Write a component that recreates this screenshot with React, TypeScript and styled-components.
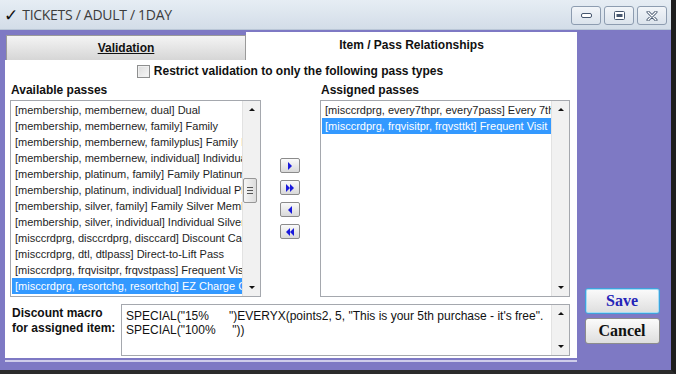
import React from 'react';
import styled, { createGlobalStyle } from 'styled-components';

const GlobalStyle = createGlobalStyle`
  html, body {
    margin: 0;
    padding: 0;
  }
  body {
    width: 676px;
    height: 374px;
    overflow: hidden;
    background: #1c1c1c;
    font-family: "Liberation Sans", Arial, sans-serif;
  }
`;

const AVAILABLE = [
  '[membership, membernew, dual] Dual',
  '[membership, membernew, family] Family',
  '[membership, membernew, familyplus] Family Plus',
  '[membership, membernew, individual] Individual Membership',
  '[membership, platinum, family] Family Platinum Membership',
  '[membership, platinum, individual] Individual Platinum',
  '[membership, silver, family] Family Silver Membership',
  '[membership, silver, individual] Individual Silver Membership',
  '[misccrdprg, disccrdprg, disccard] Discount Card',
  '[misccrdprg, dtl, dtlpass] Direct-to-Lift Pass',
  '[misccrdprg, frqvisitpr, frqvstpass] Frequent Visitor Pass',
  '[misccrdprg, resortchg, resortchg] EZ Charge Card',
];

const ASSIGNED = [
  '[misccrdprg, every7thpr, every7pass] Every 7th Visit',
  '[misccrdprg, frqvisitpr, frqvsttkt] Frequent Visit',
];

const Window = styled.div`
  width: 676px;
  height: 374px;
  box-sizing: border-box;
  display: flex;
  flex-direction: column;
  background: #7e79c4;
  border-right: 5px solid #1e1e1e;
  border-bottom: 4px solid #2b2b2b;
`;

const TitleBar = styled.div`
  height: 30px;
  flex-shrink: 0;
  display: flex;
  align-items: center;
  padding: 0 4px 0 4px;
  background: linear-gradient(#e6edf4, #d3dde8);
  border-bottom: 1px solid #b9c6d6;
  box-sizing: border-box;
`;

const Check = styled.span`
  font-family: "DejaVu Sans", sans-serif;
  font-size: 17px;
  color: #111;
  margin-right: 4px;
`;

const Title = styled.span`
  font-family: "Open Sans", "Liberation Sans", sans-serif;
  font-size: 14px;
  color: #3c3c3c;
  letter-spacing: -0.3px;
  flex: 1;
`;

const WinButtons = styled.div`
  display: flex;
  gap: 3px;
  margin-top: 2px;
`;

const WinButton = styled.div`
  width: 30px;
  height: 19px;
  box-sizing: border-box;
  border: 1px solid #8d9cb0;
  border-radius: 3px;
  background: linear-gradient(#f2f5f9, #dbe3ec);
  display: flex;
  align-items: center;
  justify-content: center;
`;

const Body = styled.div`
  flex: 1;
  display: flex;
  padding: 2px 0 0 5px;
`;

const TabBox = styled.div`
  width: 572px;
  display: flex;
  flex-direction: column;
`;

const TabRow = styled.div`
  height: 28px;
  display: flex;
  align-items: flex-end;
`;

const Tab = styled.div<{ $active?: boolean }>`
  box-sizing: border-box;
  height: ${(p) => (p.$active ? 28 : 25)}px;
  width: ${(p) => (p.$active ? 331 : 240)}px;
  margin-left: ${(p) => (p.$active ? 0 : 1)}px;
  display: flex;
  align-items: center;
  justify-content: center;
  font-size: 12px;
  font-weight: bold;
  color: #111;
  background: ${(p) => (p.$active ? '#ffffff' : 'linear-gradient(#f4f4f4, #d6d6d6)')};
  border: ${(p) => (p.$active ? 'none' : '1px solid #9a9a9a')};
  border-bottom: none;
  text-decoration: ${(p) => (p.$active ? 'none' : 'underline')};
  padding-bottom: ${(p) => (p.$active ? 2 : 0)}px;
`;

const Panel = styled.div`
  height: 298px;
  box-sizing: border-box;
  background: #ffffff;
  padding: 0 7px 0 5px;
  display: flex;
  flex-direction: column;
  box-shadow: 0 2px 0 #7e79c4, 0 4px 0 #cfcdea;
`;

const CheckRow = styled.label`
  height: 22px;
  display: flex;
  align-items: center;
  justify-content: center;
  gap: 4px;
  font-size: 12px;
  font-weight: bold;
  color: #111;
`;

const CheckBox = styled.span`
  width: 11px;
  height: 11px;
  border: 1px solid #8e8f8f;
  background: linear-gradient(135deg, #dcdcdc, #f7f7f7);
  box-shadow: inset 0 0 0 1px #f0f0f0;
`;

const Lists = styled.div`
  display: grid;
  grid-template-columns: 251px 59px 250px;
  grid-template-rows: 18px 197px;
`;

const Label = styled.div`
  font-size: 12px;
  font-weight: bold;
  color: #111;
  padding-left: 1px;
  line-height: 17px;
`;

const ListBox = styled.div`
  grid-row: 2;
  box-sizing: border-box;
  border: 1px solid #a5a8ae;
  display: flex;
  overflow: hidden;
`;

const Items = styled.div`
  flex: 1;
  min-width: 0;
  padding-top: 1px;
`;

const Item = styled.div<{ $selected?: boolean }>`
  height: 16px;
  line-height: 16px;
  padding-left: 3px;
  margin-left: 1px;
  font-size: 11px;
  white-space: nowrap;
  overflow: hidden;
  color: ${(p) => (p.$selected ? '#ffffff' : '#1e1e1e')};
  background: ${(p) => (p.$selected ? '#3399ff' : 'transparent')};
`;

const ScrollBar = styled.div`
  width: 17px;
  flex-shrink: 0;
  display: flex;
  flex-direction: column;
  background: #f1f1f1;
  border-left: 1px solid #e2e2e2;
`;

const ScrollArrow = styled.div`
  height: 17px;
  display: flex;
  align-items: center;
  justify-content: center;
`;

const Track = styled.div`
  flex: 1;
  position: relative;
`;

const Thumb = styled.div`
  position: absolute;
  left: 0;
  width: 14px;
  height: 25px;
  box-sizing: border-box;
  border: 1px solid #979797;
  border-radius: 2px;
  background: linear-gradient(90deg, #f6f6f6, #dcdcdc);
  display: flex;
  flex-direction: column;
  align-items: center;
  justify-content: center;
  gap: 2px;

  span {
    width: 6px;
    height: 1px;
    background: #555;
  }
`;

const Arrows = styled.div`
  grid-row: 2;
  grid-column: 2;
  display: flex;
  flex-direction: column;
  align-items: center;
  justify-content: center;
  gap: 7px;
  padding-right: 1px;
`;

const MoveButton = styled.div`
  width: 20px;
  height: 15px;
  box-sizing: border-box;
  border: 1px solid #8b8b8b;
  border-radius: 2px;
  background: linear-gradient(#fafafa, #d9d9d9);
  display: flex;
  align-items: center;
  justify-content: center;
`;

const MacroRow = styled.div`
  margin-top: 7px;
  display: flex;
`;

const MacroLabel = styled.div`
  width: 109px;
  padding: 2px 0 0 2px;
  font-size: 12px;
  font-weight: bold;
  line-height: 15px;
  color: #111;
`;

const MacroBox = styled.div`
  width: 449px;
  height: 52px;
  box-sizing: border-box;
  border: 1px solid #a5a8ae;
  display: flex;
`;

const MacroText = styled.div`
  flex: 1;
  padding: 4px 0 0 4px;
  font-size: 12px;
  line-height: 14px;
  white-space: pre;
  overflow: hidden;
  color: #111;
`;

const Side = styled.div`
  flex: 1;
  display: flex;
  flex-direction: column;
  align-items: center;
  justify-content: flex-end;
  gap: 4px;
  padding: 0 4px 26px 0;
`;

const DialogButton = styled.div<{ $default?: boolean }>`
  width: 75px;
  height: 26px;
  box-sizing: border-box;
  border: 1px solid ${(p) => (p.$default ? '#3fa3dc' : '#8c8c8c')};
  box-shadow: ${(p) => (p.$default ? 'inset 0 0 0 1px #a6dcf5' : 'none')};
  border-radius: 3px;
  background: linear-gradient(#fbfbfb, #dedede);
  display: flex;
  align-items: center;
  justify-content: center;
  font-family: "Liberation Serif", "Times New Roman", serif;
  font-size: 16px;
  font-weight: bold;
  color: ${(p) => (p.$default ? '#2424b8' : '#111')};
`;

const Tri = ({ dir, color = '#111', size = 4 }: { dir: 'up' | 'down' | 'left' | 'right'; color?: string; size?: number }) => {
  const s = size;
  const pts =
    dir === 'up'
      ? `0,${s} ${s},0 ${s * 2},${s}`
      : dir === 'down'
      ? `0,0 ${s * 2},0 ${s},${s}`
      : dir === 'left'
      ? `${s},0 ${s},${s * 2} 0,${s}`
      : `0,0 ${s},${s} 0,${s * 2}`;
  const w = dir === 'up' || dir === 'down' ? s * 2 : s;
  const h = dir === 'up' || dir === 'down' ? s : s * 2;
  return (
    <svg width={w} height={h} viewBox={`0 0 ${w} ${h}`}>
      <polygon points={pts} fill={color} />
    </svg>
  );
};

const Scroll = ({ thumbTop }: { thumbTop?: number }) => (
  <ScrollBar>
    <ScrollArrow>
      <Tri dir="up" size={3} />
    </ScrollArrow>
    <Track>
      {thumbTop !== undefined && (
        <Thumb style={{ top: thumbTop }}>
          <span />
          <span />
          <span />
        </Thumb>
      )}
    </Track>
    <ScrollArrow>
      <Tri dir="down" size={3} />
    </ScrollArrow>
  </ScrollBar>
);

const Move = ({ dir, double }: { dir: 'left' | 'right'; double?: boolean }) => (
  <MoveButton>
    <Tri dir={dir} color="#1a1adb" size={4} />
    {double && <Tri dir={dir} color="#1a1adb" size={4} />}
  </MoveButton>
);

const App = () => {
  return (
    <Window>
      <GlobalStyle />
      <TitleBar>
        <Check>✓</Check>
        <Title>TICKETS / ADULT / 1DAY</Title>
        <WinButtons>
          <WinButton>
            <svg width="11" height="5" viewBox="0 0 11 5">
              <rect x="0.5" y="0.5" width="10" height="4" rx="1.5" fill="#fff" stroke="#45566e" />
            </svg>
          </WinButton>
          <WinButton>
            <svg width="11" height="9" viewBox="0 0 11 9">
              <rect x="0.5" y="0.5" width="10" height="8" rx="1" fill="#fff" stroke="#45566e" />
              <rect x="2.5" y="3" width="6" height="3" fill="#45566e" />
            </svg>
          </WinButton>
          <WinButton>
            <svg width="12" height="10" viewBox="0 0 12 10">
              <path d="M2 1 L10 9 M10 1 L2 9" stroke="#45566e" strokeWidth="3" strokeLinecap="round" />
              <path d="M2 1 L10 9 M10 1 L2 9" stroke="#fff" strokeWidth="1.2" strokeLinecap="round" />
            </svg>
          </WinButton>
        </WinButtons>
      </TitleBar>
      <Body>
        <TabBox>
          <TabRow>
            <Tab>Validation</Tab>
            <Tab $active>Item / Pass Relationships</Tab>
          </TabRow>
          <Panel>
            <CheckRow>
              <CheckBox />
              Restrict validation to only the following pass types
            </CheckRow>
            <Lists>
              <Label>Available passes</Label>
              <div />
              <Label>Assigned passes</Label>
              <ListBox>
                <Items>
                  {AVAILABLE.map((a, i) => (
                    <Item key={a} $selected={i === AVAILABLE.length - 1}>
                      {a}
                    </Item>
                  ))}
                </Items>
                <Scroll thumbTop={60} />
              </ListBox>
              <Arrows>
                <Move dir="right" />
                <Move dir="right" double />
                <Move dir="left" />
                <Move dir="left" double />
              </Arrows>
              <ListBox>
                <Items>
                  {ASSIGNED.map((a, i) => (
                    <Item key={a} $selected={i === 1}>
                      {a}
                    </Item>
                  ))}
                </Items>
                <Scroll />
              </ListBox>
            </Lists>
            <MacroRow>
              <MacroLabel>
                Discount macro
                <br />
                for assigned item:
              </MacroLabel>
              <MacroBox>
                <MacroText>
                  {'SPECIAL("15%      ")EVERYX(points2, 5, "This is your 5th purchase - it\'s free".\nSPECIAL("100%     "))'}
                </MacroText>
                <Scroll />
              </MacroBox>
            </MacroRow>
          </Panel>
        </TabBox>
        <Side>
          <DialogButton $default>Save</DialogButton>
          <DialogButton>Cancel</DialogButton>
        </Side>
      </Body>
    </Window>
  );
};

export default App;
